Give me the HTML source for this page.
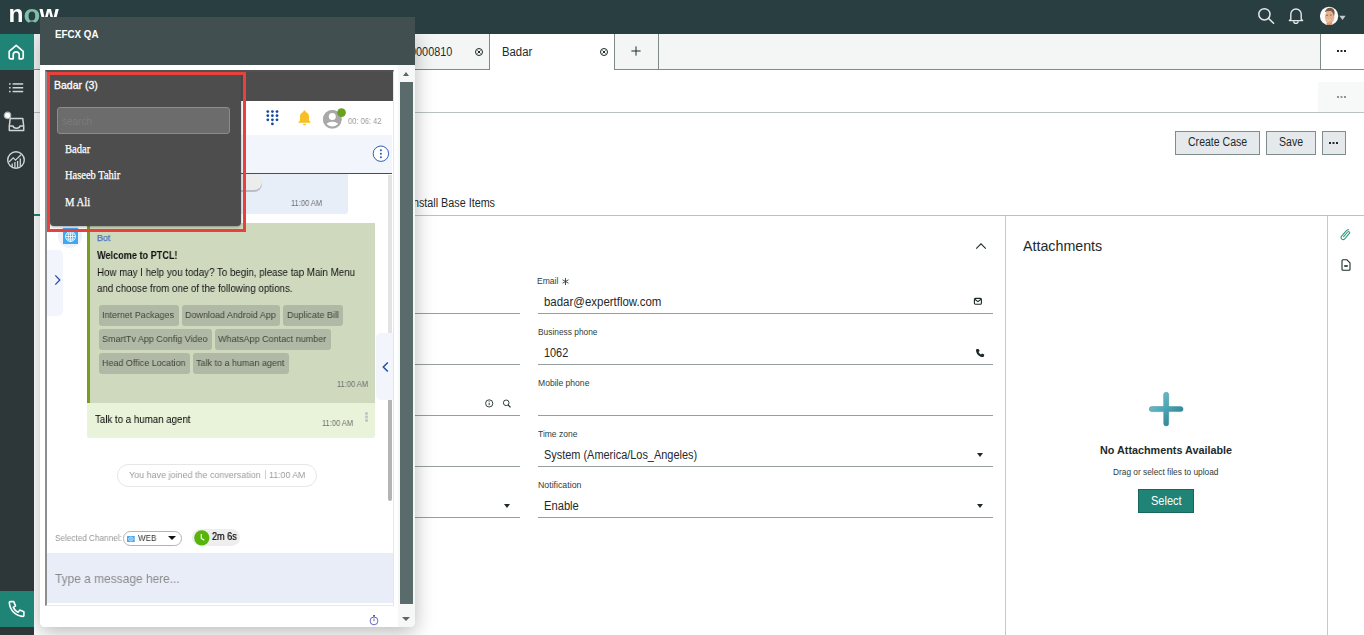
<!DOCTYPE html>
<html lang="en">
<head>
<meta charset="utf-8">
<title>Badar | ServiceNow</title>
<style>
*{box-sizing:border-box;margin:0;padding:0}
html,body{width:1364px;height:635px;overflow:hidden;background:#fff}
body{position:relative;font-family:"Liberation Sans",sans-serif;color:#1d2a2b;font-size:12px}
.abs{position:absolute}
.t{position:absolute;white-space:nowrap;line-height:1}
/* top bar + side bar */
#topbar{left:0;top:0;width:1364px;height:34px;background:#293e40}
#side{left:0;top:34px;width:34px;height:601px;background:#2d3638}
.sbtn{left:0;width:34px;height:36px;background:#1f8476}
/* page behind */
#tabbar{left:34px;top:34px;width:1330px;height:36px;background:#f4f6f6;border-bottom:1px solid #7d8b8b}
.tab{top:34px;height:36px;border-right:1px solid #7d8b8b}
.hline{height:1px;background:#b9c2c2}
.fline{height:1px;background:#94a0a0}
.lbl{font-size:9px;color:#2e3d3e}
.val{font-size:12.5px;color:#1d2a2b}
.btn{top:131px;height:24px;background:#e6e9eb;border:1px solid #7f8c8c;font-size:12px;text-align:center;line-height:21px;color:#1d2a2b}
/* popup */
#pop{left:40px;top:17px;width:375px;height:610px;background:#fff;border-radius:0 0 5px 5px}
#popsh{left:40px;top:30px;width:375px;height:597px;border-radius:0 0 5px 5px;box-shadow:0 5px 20px rgba(0,0,0,.28)}
#pophead{left:0;top:0;width:375px;height:48px;background:#424f50}
#frame{left:5px;top:53px;width:349px;height:536px;border-style:solid;border-width:2px 1px 1px 2px;border-color:#515151 #e6e6e6 #eaeaea #8e8e8e;background:#fff;overflow:hidden}
.chip{position:absolute;height:21px;background:#b0b9a5;border-radius:3px;font-size:10px;color:#4a4f45;line-height:21px;text-align:center;white-space:nowrap}

/* frame content uses absolute page coords */
#fr{left:-47px !important;top:-72px !important;width:1364px !important;height:635px !important}
.ct{font-family:"Liberation Sans",sans-serif}
.ts{font-size:8.500px;color:#6e6e6e}
.g{will-change:transform}
</style>
</head>
<body>
<!-- ===== page behind ===== -->
<div id="tabbar" class="abs"></div>
<!-- tabs -->
<div class="abs tab" style="left:360px;width:130px"></div>
<div class="t" style="left:410px;top:46.20px;font-size:12px;transform:scaleX(0.9054);transform-origin:0 50%">0000810</div>
<svg class="abs" style="left:474px;top:47px" width="10" height="10" viewBox="0 0 10 10" fill="none" stroke="#1d2a2b" stroke-width="1"><circle cx="5" cy="5" r="3.500"/><path d="M3.500 3.500l3 3M6.500 3.500l-3 3"/></svg>
<div class="abs" style="left:490px;top:34px;width:124px;height:37px;background:#fff"></div>
<div class="abs" style="left:613.600px;top:34px;width:1.200px;height:36px;background:#7d8b8b"></div>
<div class="t" style="left:501.900px;top:46.20px;font-size:12px;transform:scaleX(0.9428);transform-origin:0 50%">Badar</div>
<svg class="abs" style="left:599px;top:47px" width="10" height="10" viewBox="0 0 10 10" fill="none" stroke="#1d2a2b" stroke-width="1"><circle cx="5" cy="5" r="3.500"/><path d="M3.500 3.500l3 3M6.500 3.500l-3 3"/></svg>
<div class="abs tab" style="left:614px;width:45px"></div>
<svg class="abs" style="left:629.500px;top:44.800px" width="12" height="12" viewBox="0 0 12 12" stroke="#1d2a2b" stroke-width="1"><path d="M6 1.400v9.200M1.400 6h9.200"/></svg>
<div class="abs" style="left:1320px;top:34px;width:44px;height:35px;background:#fff;border-left:1px solid #7d8b8b"></div>
<div class="abs" style="left:1337px;top:50px;width:2px;height:2px;background:#1d2a2b;box-shadow:3.500px 0 0 #1d2a2b,7px 0 0 #1d2a2b"></div>
<!-- sub header -->
<div class="abs" style="left:1318px;top:82px;width:46px;height:30px;background:#f7f9f9"></div>
<div class="abs" style="left:1337px;top:96px;width:2px;height:2px;background:#8c9898;box-shadow:3.500px 0 0 #8c9898,7px 0 0 #8c9898"></div>
<div class="abs hline" style="left:34px;top:112px;width:1330px"></div>
<!-- action buttons -->
<div class="abs btn" style="left:1175px;width:85px"></div>
<div class="t" style="left:1187.800px;top:136.20px;font-size:12px;transform:scaleX(0.8787);transform-origin:0 50%">Create Case</div>
<div class="abs btn" style="left:1266px;width:50px"></div>
<div class="t" style="left:1278.900px;top:136.20px;font-size:12px;transform:scaleX(0.8772);transform-origin:0 50%">Save</div>
<div class="abs btn" style="left:1322px;width:24px"></div>
<div class="abs" style="left:1329px;top:142px;width:2px;height:2px;background:#1d2a2b;box-shadow:3.500px 0 0 #1d2a2b,7px 0 0 #1d2a2b"></div>
<!-- section tabs -->
<div class="t" style="left:410.200px;top:197.00px;font-size:12px;transform:scaleX(0.8974);transform-origin:0 50%">Install Base Items</div>
<div class="abs hline" style="left:34px;top:215px;width:1330px"></div>
<div class="abs" style="left:34px;top:214px;width:60px;height:2px;background:#1f8476"></div>
<!-- form -->
<svg class="abs" style="left:975px;top:241px" width="12" height="10" viewBox="0 0 12 10" fill="none" stroke="#1d2a2b" stroke-width="1.100"><path d="M1.200 7.600L6 2.800l4.800 4.800"/></svg>
<div class="t lbl" style="left:537.400px;top:277.10px;font-size:8.600px;transform:scaleX(0.9953);transform-origin:0 50%">Email</div>
<svg class="abs" style="left:561px;top:277px" width="9" height="9" viewBox="0 0 9 9" stroke="#2e3d3e" stroke-width=".900"><path d="M4.500 1v7M1.500 2.800l6 3.400M7.500 2.800l-6 3.400"/></svg>
<div class="t val" style="left:543.700px;top:295.75px;font-size:12.500px;transform:scaleX(0.9162);transform-origin:0 50%">badar@expertflow.com</div>
<svg class="abs" style="left:973px;top:297px" width="10" height="9" viewBox="0 0 10 9" fill="none" stroke="#1d2a2b" stroke-width="1.100"><rect x="1.400" y="1.400" width="7" height="5.800" rx="1"/><path d="M1.800 2.200L4.900 4.600 8 2.200"/></svg>
<div class="abs fline" style="left:538px;top:313px;width:455px"></div>
<div class="abs fline" style="left:60px;top:313px;width:460px"></div>
<div class="t lbl" style="left:537.600px;top:327.90px;font-size:8.600px;transform:scaleX(0.9729);transform-origin:0 50%">Business phone</div>
<div class="t val" style="left:543.700px;top:347.15px;font-size:12.500px;transform:scaleX(0.8701);transform-origin:0 50%">1062</div>
<svg class="abs" style="left:975.200px;top:347.600px" width="10" height="10" viewBox="0 0 9 9" fill="#1d2a2b"><path d="M1.600 1l1.600-.2 1 2-1 .9c.5 1 1.200 1.700 2.200 2.200l.9-1 2 1-.2 1.600c-.1.500-.5.700-1 .7C3.700 8 1 5.300.9 2c0-.5.200-.9.700-1z"/></svg>
<div class="abs fline" style="left:538px;top:364px;width:455px"></div>
<div class="abs fline" style="left:60px;top:364px;width:460px"></div>
<div class="t lbl" style="left:537.600px;top:378.90px;font-size:8.600px;transform:scaleX(0.9959);transform-origin:0 50%">Mobile phone</div>
<svg class="abs" style="left:484px;top:398px" width="28" height="11" viewBox="0 0 28 11" fill="none" stroke="#1d2a2b" stroke-width=".900"><circle cx="5.200" cy="5.400" r="3.600"/><path d="M5.200 4.800v2.400M5.200 3.300v.8"/><circle cx="22.200" cy="4.800" r="2.800"/><path d="M24.200 6.900l2.300 2.400" stroke-width="1.200"/></svg>
<div class="abs fline" style="left:538px;top:415px;width:455px"></div>
<div class="abs fline" style="left:60px;top:415px;width:460px"></div>
<div class="t lbl" style="left:537.600px;top:429.90px;font-size:8.600px;transform:scaleX(0.9896);transform-origin:0 50%">Time zone</div>
<div class="t val" style="left:543.700px;top:448.55px;font-size:12.500px;transform:scaleX(0.8745);transform-origin:0 50%">System (America/Los_Angeles)</div>
<div class="abs" style="left:977px;top:453px;border:3.500px solid transparent;border-top:4px solid #1d2a2b;border-bottom:0"></div>
<div class="abs fline" style="left:538px;top:466px;width:455px"></div>
<div class="abs fline" style="left:60px;top:466px;width:460px"></div>
<div class="t lbl" style="left:537.600px;top:480.90px;font-size:8.600px;transform:scaleX(1.0208);transform-origin:0 50%">Notification</div>
<div class="t val" style="left:543.700px;top:500.15px;font-size:12.500px;transform:scaleX(0.8937);transform-origin:0 50%">Enable</div>
<div class="abs" style="left:977px;top:504px;border:3.500px solid transparent;border-top:4px solid #1d2a2b;border-bottom:0"></div>
<div class="abs" style="left:504px;top:504px;border:3.500px solid transparent;border-top:4px solid #1d2a2b;border-bottom:0"></div>
<div class="abs fline" style="left:538px;top:517px;width:455px"></div>
<div class="abs fline" style="left:60px;top:517px;width:460px"></div>
<!-- attachments -->
<div class="abs" style="left:1005px;top:216px;width:1px;height:419px;background:#c3caca"></div>
<div class="abs" style="left:1327px;top:216px;width:1px;height:419px;background:#c3caca"></div>
<div class="t" style="left:1023px;top:238.30px;font-size:15px;transform:scaleX(0.9499);transform-origin:0 50%">Attachments</div>
<svg class="abs" style="left:1340px;top:228px" width="12" height="14" viewBox="0 0 12 14" fill="none" stroke="#2f9a80" stroke-width="1.100" stroke-linecap="round"><path d="M3.600 8.600l4-4.600a1.100 1.100 0 0 1 1.700 1.400l-4.600 5.400a2 2 0 0 1-3.100-2.600l4.800-5.600a2.600 2.600 0 0 1 2.400-.8"/></svg>
<svg class="abs" style="left:1340px;top:258px" width="12" height="14" viewBox="0 0 12 14" fill="none" stroke="#1d2a2b" stroke-width="1.100" stroke-linejoin="round"><path d="M2 2.800a1 1 0 0 1 1-1h4l3 3v6.400a1 1 0 0 1-1 1H3a1 1 0 0 1-1-1z"/><path d="M4.200 8h3.600" stroke-width="1.600"/></svg>
<svg class="abs" style="left:1147px;top:390px" width="38" height="38" viewBox="0 0 38 38"><defs><linearGradient id="pg" x1="0" y1="0" x2="1" y2="1"><stop offset="0" stop-color="#86cbd5"/><stop offset=".5" stop-color="#4aa3b3"/><stop offset="1" stop-color="#256f80"/></linearGradient></defs><path d="M16.700 4.700a2.500 2.500 0 0 1 5 0v11.900h11.900a2.500 2.500 0 0 1 0 5H21.700v11.900a2.500 2.500 0 0 1-5 0V21.600H4.800a2.500 2.500 0 0 1 0-5h11.900z" fill="url(#pg)" stroke="#3a8fa0" stroke-width=".500"/></svg>
<div class="t" style="left:1099.700px;top:444.65px;font-size:11.500px;font-weight:bold;color:#1d2a2b;transform:scaleX(0.9389);transform-origin:0 50%">No Attachments Available</div>
<div class="t" style="left:1112.500px;top:467.80px;font-size:8.600px;color:#2e3d3e;transform:scaleX(0.9677);transform-origin:0 50%">Drag or select files to upload</div>
<div class="abs" style="left:1138px;top:489.200px;width:56px;height:23.600px;background:#1f8476;border:1px solid #17665b"></div>
<div class="t" style="left:1150.800px;top:494.55px;font-size:12.500px;color:#fff;transform:scaleX(0.8806);transform-origin:0 50%">Select</div>

<div id="popsh" class="abs"></div>
<!-- ===== top bar ===== -->
<div id="topbar" class="abs">
  <!-- now logo -->
  <svg class="abs" style="left:8px;top:6px;will-change:transform" width="56" height="20" viewBox="0 0 56 20">
    <text x="0.500" y="16" font-family="Liberation Sans, sans-serif" font-weight="bold" font-size="23" fill="#fff" textLength="15" lengthAdjust="spacingAndGlyphs">n</text>
    <text x="15.500" y="16.900" font-family="Liberation Sans, sans-serif" font-weight="bold" font-size="25.500" fill="#7fbfa9" textLength="16.800" lengthAdjust="spacingAndGlyphs">o</text>
    <ellipse cx="23.950" cy="17.500" rx="3.100" ry="2.100" fill="#293e40"/>
    <text x="31.400" y="16" font-family="Liberation Sans, sans-serif" font-weight="bold" font-size="23" fill="#fff" textLength="19.200" lengthAdjust="spacingAndGlyphs">w</text>
  </svg>
  <!-- search -->
  <svg class="abs" style="left:1255px;top:5px" width="22" height="22" viewBox="0 0 22 22" fill="none" stroke="#e3e7e7" stroke-width="1.5"><circle cx="9.4" cy="9.3" r="5.6"/><path d="M13.5 13.400L18.600 18.300" stroke-linecap="round"/></svg>
  <!-- bell -->
  <svg class="abs" style="left:1286px;top:5.100px" width="20" height="20" viewBox="0 0 20 20" fill="none" stroke="#e3e7e7" stroke-width="1.4" stroke-linejoin="round"><path d="M4.8 14.200V9.200a5.200 5.200 0 0 1 10.400 0v5l1.400 1.400H3.400z"/><path d="M7.800 16.200a2.200 2.200 0 0 0 4.400 0"/></svg>
  <!-- avatar -->
  <svg class="abs" style="left:1319px;top:6px" width="30" height="20" viewBox="0 0 30 20">
    <defs><clipPath id="avc"><circle cx="10.100" cy="9.900" r="9.200"/></clipPath></defs>
    <circle cx="10.100" cy="9.900" r="9.200" fill="#fbfaf9"/>
    <g clip-path="url(#avc)"><g>
      <ellipse cx="10.600" cy="11.200" rx="4.600" ry="6.600" fill="#e7b190"/>
      <path d="M5.800 6.200c.8-3.300 3.200-4.600 5.600-4.400 2.600.2 4.200 2 4.200 5 0 1.600-.3 2.800-.8 3.600-.2-2-.8-4-2.200-5-1.800-.6-4.200-.2-6.800.8z" fill="#7a5a44"/>
      <path d="M7.600 16.500c1.600 1.200 3.800.8 5.200-.8l1 5h-6.500z" fill="#d9956a"/>
      <path d="M7.400 13c1.300 1.300 3.200 1.300 4.600.1-.9 1.700-3.600 2-4.600-.1z" fill="#fff"/>
      <path d="M7.200 9.300h1.800M10.800 9.100h1.800" stroke="#6a4a3a" stroke-width=".700"/>
    </g></g>
    <path d="M20.400 9.800h6.200l-3.100 4.200z" fill="#c5cccc"/>
  </svg>
</div>
<div id="side" class="abs"></div>
<div class="abs sbtn" style="top:34px">
  <svg class="abs" style="left:6px;top:8px" width="22" height="20" viewBox="0 0 22 20" fill="none" stroke="#fff" stroke-width="1.700" stroke-linejoin="round" stroke-linecap="round"><path d="M3.200 9.300L10.200 3.300l7 6v6.200a1.300 1.300 0 0 1-1.300 1.300h-2.700v-4a3 3 0 0 0-6 0v4H4.500a1.300 1.300 0 0 1-1.300-1.300z"/></svg>
</div>
<!-- list icon -->
<svg class="abs" style="left:8px;top:82.400px" width="18" height="13" viewBox="0 0 18 13" fill="#cfd5d5"><rect x="1" y="1.200" width="1.600" height="1.500"/><rect x="4.600" y="1.200" width="10.600" height="1.500"/><rect x="1" y="5" width="1.600" height="1.500"/><rect x="4.600" y="5" width="10.600" height="1.500"/><rect x="1" y="8.800" width="1.600" height="1.500"/><rect x="4.600" y="8.800" width="10.600" height="1.500"/></svg>
<!-- inbox icon -->
<svg class="abs" style="left:1.800px;top:109.800px" width="26" height="24" viewBox="0 0 26 24" fill="none" stroke="#cfd5d5" stroke-width="1.500" stroke-linejoin="round"><path d="M8.200 8.600h12.600l.9 7.400v4.600H7.300V16z"/><path d="M7.300 16h3.700c.3 1.400 1.700 2.200 3.500 2.200s3.200-.8 3.500-2.200h3.700"/><circle cx="5.500" cy="5.400" r="3.200" fill="#fff" stroke="#a9b1b1" stroke-width="1.200"/></svg>
<!-- chart icon -->
<svg class="abs" style="left:6px;top:150px" width="20" height="20" viewBox="0 0 20 20" fill="none" stroke="#cfd5d5" stroke-width="1.400"><circle cx="10" cy="10" r="8.300"/><path d="M3 12l4.200-4.200 2.300 2.300 5.500-5.300" stroke-width="1.200"/><path d="M6.200 13.500v3.400M8.900 12v5.800M11.600 11v6.800M14.300 8.500v7.800" stroke-width="1.300"/></svg>
<!-- phone button -->
<div class="abs sbtn" style="top:591px">
  <svg class="abs" style="left:7px;top:8px" width="20" height="20" viewBox="0 0 20 20" fill="none" stroke="#fff" stroke-width="1.600" stroke-linejoin="round"><path d="M3.200 2.600h3.600l1.700 4.300-2.200 1.500c.9 2.100 2.700 3.900 4.800 4.900l1.600-2.200 4.200 1.700v3.600c0 .6-.5 1-1.100 1C8.600 17 3 11.400 2.300 3.700c0-.6.400-1.100.9-1.100z"/></svg>
</div>

<!-- ===== popup ===== -->
<div id="pop" class="abs">
  <div id="pophead" class="abs"></div>
  <div class="t" style="left:14.700px;top:11.80px;font-size:10.800px;font-weight:bold;color:#fff;transform:scaleX(0.9062);transform-origin:0 50%">EFCX QA</div>
  <!-- popup scrollbar -->
  <div class="abs" style="left:358px;top:48px;width:17px;height:562px;background:#f6f8f8;border-radius:0 0 5px 0"></div>
  <div class="abs" style="left:360px;top:65px;width:13px;height:522px;background:#5a6b6c"></div>
  <div class="abs" style="left:362.800px;top:54.800px;border:3.700px solid transparent;border-bottom:4.200px solid #56676a;border-top:0"></div>
  <div class="abs" style="left:362.400px;top:600px;border:4px solid transparent;border-top:4.400px solid #56676a;border-bottom:0"></div>
  <!-- stopwatch -->
  <svg class="abs" style="left:328px;top:597px" width="12" height="12" viewBox="0 0 12 12" fill="none" stroke="#3438a8" stroke-width=".750"><circle cx="6" cy="6.900" r="3.900"/><path d="M5.200 1.600h1.600" stroke-width="1.100"/><path d="M6 1.800v1.200M6 4.600v2.600"/></svg>
  <div id="frame" class="abs">
    <div id="fr" class="abs" style="left:0;top:0;width:345px;height:532px">
      <!-- dark title bar -->
      <div class="abs" style="left:47px;top:72px;width:346px;height:29px;background:#4d4d4d"></div>
      <!-- toolbar -->
      <svg class="abs" style="left:265px;top:109px" width="15" height="17" viewBox="0 0 15 17" fill="#1747a6"><circle cx="2.800" cy="2.600" r="1.400"/><circle cx="7.400" cy="2.600" r="1.400"/><circle cx="12" cy="2.600" r="1.400"/><circle cx="2.800" cy="6.700" r="1.400"/><circle cx="7.400" cy="6.700" r="1.400"/><circle cx="12" cy="6.700" r="1.400"/><circle cx="2.800" cy="10.800" r="1.400"/><circle cx="7.400" cy="10.800" r="1.400"/><circle cx="12" cy="10.800" r="1.400"/><circle cx="7.400" cy="14.900" r="1.400"/></svg>
      <svg class="abs" style="left:297px;top:109px" width="15" height="17" viewBox="0 0 15 17" fill="#f6bf26"><path d="M7.500 1.400c.7 0 1.200.5 1.200 1.100v.5c2.100.6 3.300 2.400 3.300 4.700v3.700l1.500 1.600v.8H1.500V13L3 11.400V7.700C3 5.400 4.200 3.600 6.300 3v-.5c0-.6.500-1.100 1.200-1.100z"/><path d="M6 14.700h3a1.500 1.500 0 0 1-3 0z"/></svg>
      <svg class="abs" style="left:322px;top:107px" width="26" height="23" viewBox="0 0 26 23"><defs><clipPath id="agc"><circle cx="10.300" cy="12.300" r="9.300"/></clipPath></defs><circle cx="10.300" cy="12.300" r="9.300" fill="#a9a9a9"/><g clip-path="url(#agc)" fill="#fff"><circle cx="10.300" cy="9.600" r="3.500"/><path d="M3.300 19.600c0-3.400 4.400-4.800 7-4.800s7 1.400 7 4.800v3H3.300z"/></g><circle cx="10.300" cy="12.300" r="8.300" fill="none" stroke="#a9a9a9" stroke-width="2"/><circle cx="19.500" cy="5.600" r="4.400" fill="#6aa121"/></svg>
      <div class="t ts g" style="left:347.600px;top:117.25px;font-size:8.500px;color:#9a9a9a;transform:scaleX(0.8860);transform-origin:0 50%">00: 06: 42</div>
      <!-- sub bar -->
      <div class="abs" style="left:47px;top:135px;width:345px;height:38px;background:#f2f5fb"></div>
      <svg class="abs" style="left:371px;top:144px" width="20" height="20" viewBox="0 0 20 20"><circle cx="9.900" cy="9.700" r="7.700" fill="#fff" stroke="#2f5fb5" stroke-width="1"/><g fill="#2f5fb5"><circle cx="9.900" cy="6.200" r="1.050"/><circle cx="9.900" cy="9.700" r="1.050"/><circle cx="9.900" cy="13.200" r="1.050"/></g></svg>
      <div class="abs" style="left:47px;top:172.800px;width:345px;height:1.200px;background:#f00"></div>
      <!-- previous message (partly hidden) -->
      <div class="abs" style="left:87px;top:174px;width:261px;height:40px;background:#e8eef8;border-radius:0 0 3px 3px"></div>
      <div class="abs" style="left:120px;top:174.200px;width:142px;height:16px;background:#ececec;border-radius:8px;box-shadow:0 2px 0 #b9bec9"></div>
      <div class="t ts g" style="left:291.400px;top:198.75px;font-size:8.500px;transform:scaleX(0.8783);transform-origin:0 50%">11:00 AM</div>
      <!-- inner scrollbar -->
      <div class="abs" style="left:388px;top:175px;width:3.600px;height:158px;background:#e3e3e3"></div>
      <div class="abs" style="left:388px;top:400px;width:3.800px;height:101px;background:#b4b4b4;border-radius:0 0 2px 2px"></div>
      <!-- left expander -->
      <div class="abs" style="left:47px;top:250px;width:16px;height:66px;background:#f2f5fb;border-radius:0 5px 5px 0"></div>
      <svg class="abs" style="left:53px;top:273.300px" width="9" height="14" viewBox="0 0 9 14" fill="none" stroke="#2350a8" stroke-width="1.300"><path d="M2.300 2.400L6.800 7l-4.500 4.600"/></svg>
      <!-- right expander -->
      <div class="abs" style="left:376px;top:333px;width:16.500px;height:67px;background:#f2f5fb;border-radius:5px 0 0 5px"></div>
      <svg class="abs" style="left:381px;top:360px" width="9" height="14" viewBox="0 0 9 14" fill="none" stroke="#2350a8" stroke-width="1.500"><path d="M6.800 2.400L2.300 7l4.500 4.600"/></svg>
      <!-- bot avatar -->
      <div class="abs" style="left:58px;top:224px;width:24px;height:24px;border-radius:12px;background:#eef1f8"></div>
      <svg class="abs" style="left:63px;top:227.600px" width="15" height="16" viewBox="0 0 15 16"><rect x="0" y="0" width="15" height="16" fill="#3fa9f0"/><g fill="none" stroke="#fff" stroke-width=".800"><circle cx="7.500" cy="8.500" r="5"/><ellipse cx="7.500" cy="8.500" rx="2.200" ry="5"/><path d="M2.500 8.500h10M7.500 3.500v10M3.300 6h8.400M3.300 11h8.400"/></g></svg>
      <!-- bot bubble -->
      <div class="abs" style="left:87px;top:223px;width:288px;height:180px;background:#cfd9be;border-left:3px solid #789c1c"></div>
      <div class="t ct g" style="left:97px;top:233.25px;font-size:9.500px;color:#4674c6;-webkit-text-stroke:.250px #4674c6;transform:scaleX(0.9463);transform-origin:0 50%">Bot</div>
      <div class="t ct g" style="left:97px;top:249.80px;font-size:10.800px;font-weight:bold;color:#111;transform:scaleX(0.8457);transform-origin:0 50%">Welcome to PTCL!</div>
      <div class="t ct g" style="left:97px;top:267.30px;font-size:10.600px;color:#111;transform:scaleX(0.9191);transform-origin:0 50%">How may I help you today? To begin, please tap Main Menu</div>
      <div class="t ct g" style="left:97px;top:283.30px;font-size:10.600px;color:#111;transform:scaleX(0.9170);transform-origin:0 50%">and choose from one of the following options.</div>
      <div class="chip" style="left:99px;top:305.200px;width:80px"></div>
      <div class="t ct g" style="left:102.200px;top:309.80px;font-size:9.600px;color:#3e433a;transform:scaleX(0.9309);transform-origin:0 50%">Internet Packages</div>
      <div class="chip" style="left:182.200px;top:305.200px;width:97.700px"></div>
      <div class="t ct g" style="left:185.000px;top:309.80px;font-size:9.600px;color:#3e433a;transform:scaleX(0.9353);transform-origin:0 50%">Download Android App</div>
      <div class="chip" style="left:283.200px;top:305.200px;width:59.700px"></div>
      <div class="t ct g" style="left:286.700px;top:309.80px;font-size:9.600px;color:#3e433a;transform:scaleX(0.9339);transform-origin:0 50%">Duplicate Bill</div>
      <div class="chip" style="left:99px;top:329.200px;width:112.700px"></div>
      <div class="t ct g" style="left:102.200px;top:333.80px;font-size:9.600px;color:#3e433a;transform:scaleX(0.9345);transform-origin:0 50%">SmartTv App Config Video</div>
      <div class="chip" style="left:215.100px;top:329.200px;width:115.700px"></div>
      <div class="t ct g" style="left:218.300px;top:333.80px;font-size:9.600px;color:#3e433a;transform:scaleX(0.9393);transform-origin:0 50%">WhatsApp Contact number</div>
      <div class="chip" style="left:99px;top:353.200px;width:90.800px"></div>
      <div class="t ct g" style="left:102.200px;top:357.80px;font-size:9.600px;color:#3e433a;transform:scaleX(0.9349);transform-origin:0 50%">Head Office Location</div>
      <div class="chip" style="left:193.200px;top:353.200px;width:96px"></div>
      <div class="t ct g" style="left:196.400px;top:357.80px;font-size:9.600px;color:#3e433a;transform:scaleX(0.9364);transform-origin:0 50%">Talk to a human agent</div>
      <div class="t ts g" style="left:336.900px;top:379.95px;font-size:8.500px;transform:scaleX(0.8783);transform-origin:0 50%">11:00 AM</div>
      <!-- user bubble -->
      <div class="abs" style="left:87px;top:402.700px;width:288px;height:35px;background:#e8f3d9;border-radius:0 0 3px 3px"></div>
      <div class="t ct g" style="left:94.800px;top:414.30px;font-size:10.600px;color:#000;transform:scaleX(0.9161);transform-origin:0 50%">Talk to a human agent</div>
      <div class="t ts g" style="left:322.100px;top:418.95px;font-size:8.500px;transform:scaleX(0.8783);transform-origin:0 50%">11:00 AM</div>
      <div class="abs" style="left:365.300px;top:412.200px;width:2.500px;height:2.500px;border-radius:1.300px;background:#c3c6c4;box-shadow:0 3.500px 0 #c3c6c4,0 7px 0 #c3c6c4"></div>
      <!-- system pill -->
      <div class="abs" style="left:117.300px;top:464px;width:200px;height:22.800px;border:1px solid #e6e6e6;border-radius:11.400px;background:#fff"></div>
      <div class="t ct g" style="left:129.300px;top:470.95px;font-size:9.300px;color:#9b9b9b;transform:scaleX(0.9638);transform-origin:0 50%">You have joined the conversation</div>
      <div class="abs" style="left:265px;top:470px;width:1px;height:9px;background:#cfcfcf"></div>
      <div class="t ct g" style="left:269.400px;top:470.95px;font-size:9.300px;color:#9b9b9b;transform:scaleX(0.9406);transform-origin:0 50%">11:00 AM</div>
      <!-- channel row -->
      <div class="t ct g" style="left:54.800px;top:533.90px;font-size:8.600px;color:#969696;transform:scaleX(0.9511);transform-origin:0 50%">Selected Channel:</div>
      <div class="abs" style="left:123px;top:531px;width:58.600px;height:14.600px;border:1px solid #b3b3b3;border-radius:7.300px;background:#fff"></div>
      <svg class="abs" style="left:127px;top:535.500px" width="8" height="6" viewBox="0 0 8 6"><rect width="7.700" height="6" rx=".600" fill="#46a6ee"/><ellipse cx="3.850" cy="3" rx="2.300" ry="2" fill="none" stroke="#d8ecfb" stroke-width=".700"/><path d="M1.500 3h4.700M3.850 1v4" stroke="#d8ecfb" stroke-width=".500"/></svg>
      <div class="t ct g" style="left:138px;top:533.55px;font-size:9.300px;color:#333;transform:scaleX(0.8684);transform-origin:0 50%">WEB</div>
      <div class="abs" style="left:167.800px;top:536px;border:4.100px solid transparent;border-top:4.800px solid #111;border-bottom:0"></div>
      <div class="abs" style="left:192.400px;top:529.300px;width:47.200px;height:17px;border-radius:8.500px;background:#eee"></div>
      <svg class="abs" style="left:194px;top:529.800px" width="16" height="16" viewBox="0 0 16 16"><circle cx="7.800" cy="7.800" r="7.600" fill="#57b40a"/><path d="M7.300 4v4.500l3 1.600" fill="none" stroke="#fff" stroke-width="1.200"/></svg>
      <div class="t ct g" style="left:211.800px;top:532.40px;font-size:10px;color:#000;-webkit-text-stroke:.200px #000;transform:scaleX(0.9069);transform-origin:0 50%">2m 6s</div>
      <!-- message box -->
      <div class="abs" style="left:47px;top:553px;width:345.500px;height:49.800px;background:#e8edf7"></div>
      <div class="t ct g" style="left:54.800px;top:572.50px;font-size:12.600px;color:#8b8b8b;transform:scaleX(0.9475);transform-origin:0 50%">Type a message here...</div>
      <!-- dropdown + red highlight -->
      <div class="abs" style="left:50px;top:72px;width:191px;height:154px;background:#4d4d4d;border-radius:0 0 4px 4px;box-shadow:0 1px 3px rgba(0,0,0,.35)"></div>
      <div class="t ct" style="left:53.700px;top:79.80px;font-size:10.800px;color:#fff;-webkit-text-stroke:.300px #fff;transform:scaleX(0.9730);transform-origin:0 50%">Badar (3)</div>
      <div class="abs" style="left:56.700px;top:107.400px;width:173.200px;height:26.800px;background:#6c6c6c;border:1px solid #8c8c8c;border-radius:3px"></div>
      <div class="t ct" style="left:62px;top:116.15px;font-size:10.500px;color:#7b7b7b;transform:scaleX(0.9519);transform-origin:0 50%">search</div>
      <div class="t" style="left:65px;top:144.15px;font-family:'Liberation Serif',serif;font-size:11.500px;color:#fff;-webkit-text-stroke:.250px #fff;transform:scaleX(0.9174);transform-origin:0 50%">Badar</div>
      <div class="t" style="left:65px;top:170.35px;font-family:'Liberation Serif',serif;font-size:11.500px;color:#fff;-webkit-text-stroke:.250px #fff;transform:scaleX(0.9105);transform-origin:0 50%">Haseeb Tahir</div>
      <div class="t" style="left:65px;top:197.45px;font-family:'Liberation Serif',serif;font-size:11.500px;color:#fff;-webkit-text-stroke:.250px #fff;transform:scaleX(0.9274);transform-origin:0 50%">M Ali</div>
      <div class="abs" style="left:47px;top:71.600px;width:199px;height:160.400px;border:3px solid #e8413c"></div>

    </div>
  </div>
</div>
</body>
</html>
